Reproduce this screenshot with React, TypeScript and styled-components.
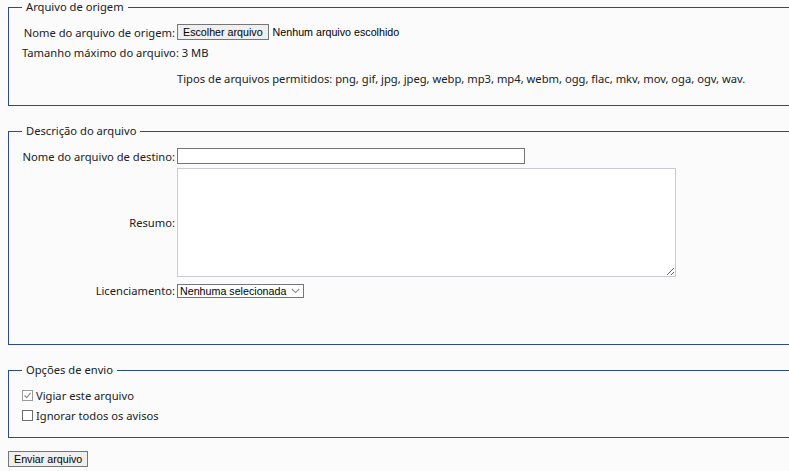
import React from 'react';
import styled, { createGlobalStyle } from 'styled-components';

const GlobalStyle = createGlobalStyle`
  html, body {
    margin: 0;
    padding: 0;
    background: #fbfbfb;
    overflow: hidden;
  }
  body {
    font-family: 'Noto Sans', 'Open Sans', sans-serif;
    font-size: 11.2px;
    color: #202122;
  }
`;

const Page = styled.form`
  width: 820px;
  padding: 0 0 0 8px;
`;

const Fieldset = styled.fieldset<{ $top: number; $bottom: number }>`
  margin: ${(p) => p.$top}px 0 0 0;
  padding: 8px 13px ${(p) => p.$bottom}px 13px;
  border: 1px solid #2a4b8d;
  min-width: 0;
`;

const Legend = styled.legend`
  padding: 0 4px;
  line-height: 14px;
  font-size: 11.2px;
`;

const Grid = styled.div`
  display: grid;
  grid-template-columns: 155px 1fr;
`;

const Label = styled.label`
  display: flex;
  align-items: center;
  justify-content: flex-end;
  padding-right: 2px;
  white-space: nowrap;
`;

const Cell = styled.div<{ $h?: number; $mt?: number }>`
  display: flex;
  align-items: center;
  min-height: ${(p) => p.$h ?? 20}px;
  margin-top: ${(p) => p.$mt ?? 0}px;
  white-space: nowrap;
`;

const Wide = styled(Cell)`
  grid-column: 1 / span 2;
`;

const NativeButton = styled.button`
  font-family: 'Liberation Sans', Arial, sans-serif;
  font-size: 10.7px;
  height: 16px;
  padding: 0 5px;
  background: #efefef;
  border: 1px solid #767676;
  border-radius: 0;
  color: #000;
  line-height: 14px;
`;

const FileButton = styled(NativeButton)`
  margin: 0 4px 0 0;
`;

const FileStatus = styled.span`
  font-family: 'Liberation Sans', Arial, sans-serif;
  font-size: 10.7px;
  color: #000;
`;

const TextInput = styled.input`
  box-sizing: border-box;
  width: 348px;
  height: 16px;
  margin: 0;
  padding: 0 2px;
  border: 1px solid #767676;
  background: #fff;
  font-size: 11px;
`;

const Summary = styled.textarea`
  box-sizing: border-box;
  width: 499px;
  height: 109px;
  margin: 2px 0;
  padding: 2px;
  border: 1px solid #c8ccd1;
  background: #fff;
  display: block;
  resize: both;
`;

const SelectBox = styled.div`
  position: relative;
  display: inline-flex;
  align-items: center;
  box-sizing: border-box;
  width: 127px;
  height: 14px;
  border: 1px solid #767676;
  background: #fff;
`;

const Select = styled.select`
  appearance: none;
  border: none;
  outline: none;
  background: transparent;
  width: 100%;
  height: 12px;
  padding: 0 14px 0 2px;
  margin: 0;
  font-family: 'Liberation Sans', Arial, sans-serif;
  font-size: 10.7px;
  line-height: 12px;
  color: #000;
`;

const Chevron = styled.svg`
  position: absolute;
  right: 3px;
  top: 3px;
  pointer-events: none;
`;

const CheckRow = styled.label`
  display: flex;
  align-items: center;
  height: 20px;
  gap: 3px;
`;

const Box = styled.span<{ $checked?: boolean }>`
  box-sizing: border-box;
  width: 11px;
  height: 11px;
  border: 1px solid ${(p) => (p.$checked ? '#9a9a9a' : '#6d6d6d')};
  background: #fff;
  display: inline-flex;
  align-items: center;
  justify-content: center;
`;

const Submit = styled(NativeButton)`
  margin: 13px 0 0 0;
`;

const Checkbox: React.FC<{ checked?: boolean; label: string }> = ({ checked, label }) => (
  <CheckRow>
    <Box $checked={checked}>
      {checked && (
        <svg width="9" height="9" viewBox="0 0 9 9">
          <path d="M1.5 4.5 L3.6 6.6 L7.6 1.8" fill="none" stroke="#8a8a8a" strokeWidth="1.1" />
        </svg>
      )}
    </Box>
    {label}
  </CheckRow>
);

export default function App() {
  return (
    <>
      <GlobalStyle />
      <Page onSubmit={(e) => e.preventDefault()}>
        <Fieldset $top={0} $bottom={17}>
          <Legend>Arquivo de origem</Legend>
          <Grid>
            <Label>Nome do arquivo de origem:</Label>
            <Cell>
              <FileButton type="button">Escolher arquivo</FileButton>
              <FileStatus>Nenhum arquivo escolhido</FileStatus>
            </Cell>
            <Wide>Tamanho máximo do arquivo: 3 MB</Wide>
            <span />
            <Cell $mt={6}>
              Tipos de arquivos permitidos: png, gif, jpg, jpeg, webp, mp3, mp4, webm, ogg, flac, mkv, mov, oga, ogv, wav.
            </Cell>
          </Grid>
        </Fieldset>

        <Fieldset $top={18} $bottom={43}>
          <Legend>Descrição do arquivo</Legend>
          <Grid>
            <Label>Nome do arquivo de destino:</Label>
            <Cell>
              <TextInput type="text" />
            </Cell>
            <Label>Resumo:</Label>
            <Cell>
              <Summary />
            </Cell>
            <Label>Licenciamento:</Label>
            <Cell $mt={2}>
              <SelectBox>
                <Select defaultValue="">
                  <option value="">Nenhuma selecionada</option>
                </Select>
                <Chevron width="9" height="6" viewBox="0 0 9 6">
                  <path d="M0.8 1 L4.5 4.6 L8.2 1" fill="none" stroke="#8a8a8a" strokeWidth="1.1" />
                </Chevron>
              </SelectBox>
            </Cell>
          </Grid>
        </Fieldset>

        <Fieldset $top={18} $bottom={12}>
          <Legend>Opções de envio</Legend>
          <Checkbox checked label="Vigiar este arquivo" />
          <Checkbox label="Ignorar todos os avisos" />
        </Fieldset>

        <Submit type="submit">Enviar arquivo</Submit>
      </Page>
    </>
  );
}
